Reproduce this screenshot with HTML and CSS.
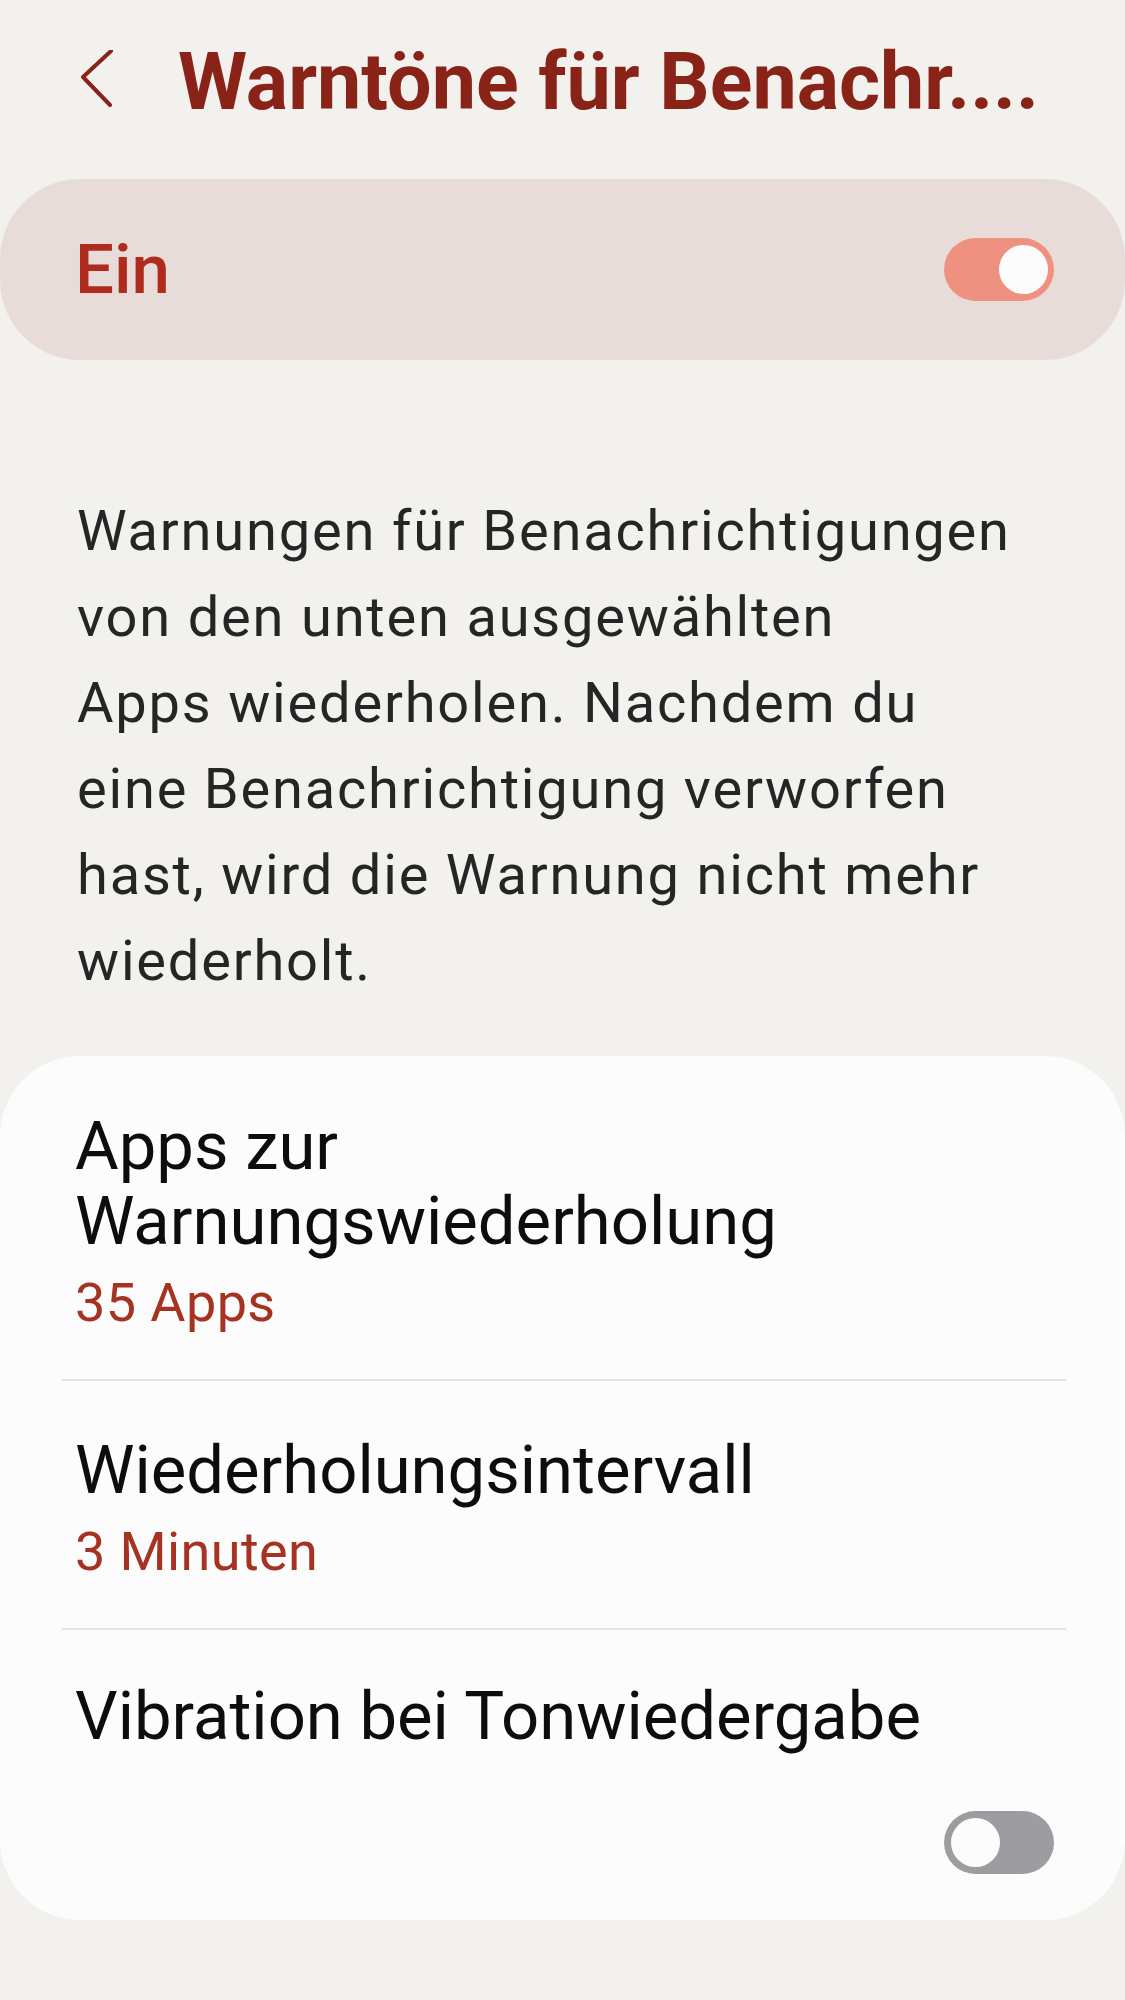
FILE: index.html
```html
<!DOCTYPE html>
<html>
  <head>
    <title>Warntöne für Benachrichtigungen</title>
    <link rel="stylesheet" href="styles.css">
  </head>

  <body>

    <div class="header">
      <svg class="back" width="40" height="64" viewBox="0 0 40 64">
        <polyline points="35,1 7,27 34,55" />
      </svg>
      <h1 class="title">Warntöne für Benachr....</h1>
    </div>

    <div class="master">
      <span class="master_label">Ein</span>
      <div class="switch on"><div class="knob"></div></div>
    </div>

    <p class="description">
      Warnungen für Benachrichtigungen<br />
      von den unten ausgewählten<br />
      Apps wiederholen. Nachdem du<br />
      eine Benachrichtigung verworfen<br />
      hast, wird die Warnung nicht mehr<br />
      wiederholt.
    </p>

    <div class="card">
      <div class="item first">
        <div class="item_title">Apps zur<br />Warnungswiederholung</div>
        <div class="item_sub">35 Apps</div>
      </div>
      <div class="item second">
        <div class="item_title">Wiederholungsintervall</div>
        <div class="item_sub">3 Minuten</div>
      </div>
      <div class="item last">
        <div class="item_title">Vibration bei Tonwiedergabe</div>
        <div class="switch off"><div class="knob"></div></div>
      </div>
    </div>

  </body>
</html>
```

FILE: styles.css
```css
* {
  padding: 0;
  margin: 0;
  box-sizing: border-box;
  font-family: Roboto, "Liberation Sans", sans-serif;
}

body {
  width: 1125px;
  min-height: 2000px;
  background: #f2f1ee;
}

.header {
  display: flex;
  align-items: center;
  height: 136px;
  padding: 28px 0 0 76px;
}
.back {
  fill: none;
  stroke: #8a2317;
  stroke-width: 4;
  stroke-linecap: round;
  stroke-linejoin: round;
}
.title {
  margin-left: 62px;
  font-size: 79px;
  font-weight: 700;
  line-height: 100px;
  color: #8a2317;
  white-space: nowrap;
}

.master {
  display: flex;
  align-items: center;
  justify-content: space-between;
  height: 181px;
  margin-top: 43px;
  padding: 0 71px 0 75px;
  background: #e8dcd9;
  border-radius: 80px;
}
.master_label {
  font-size: 69px;
  font-weight: 500;
  color: #af2b1d;
}

.switch {
  position: relative;
  width: 110px;
  height: 63px;
  border-radius: 32px;
}
.switch .knob {
  position: absolute;
  top: 7px;
  width: 49px;
  height: 49px;
  border-radius: 50%;
  background: #fdfcfc;
}
.switch.on {
  background: #ef9181;
}
.switch.on .knob {
  right: 6px;
}
.switch.off {
  background: #9d9ca1;
}
.switch.off .knob {
  left: 7px;
}

.description {
  margin-top: 128px;
  padding-left: 77px;
  font-size: 56px;
  line-height: 86px;
  letter-spacing: 1.8px;
  color: #252525;
}

.card {
  margin-top: 52px;
  padding: 0 59px 0 62px;
  background: #fcfcfc;
  border-radius: 80px;
  height: 864px;
}
.item {
  display: flex;
  flex-direction: column;
  padding: 52px 15px 45px 13px;
}
.item + .item {
  border-top: 2px solid #e4e4e6;
}
.item.first {
  padding-top: 53px;
}
.item.last {
  padding-top: 49px;
}
.item_title {
  font-size: 67px;
  line-height: 75px;
  color: #0d0d0d;
}
.item_sub {
  margin-top: 13px;
  font-size: 54px;
  line-height: 62px;
  letter-spacing: 0.4px;
  color: #a63222;
}
.item .switch {
  align-self: flex-end;
  margin: 57px -3px 0 0;
}
```
